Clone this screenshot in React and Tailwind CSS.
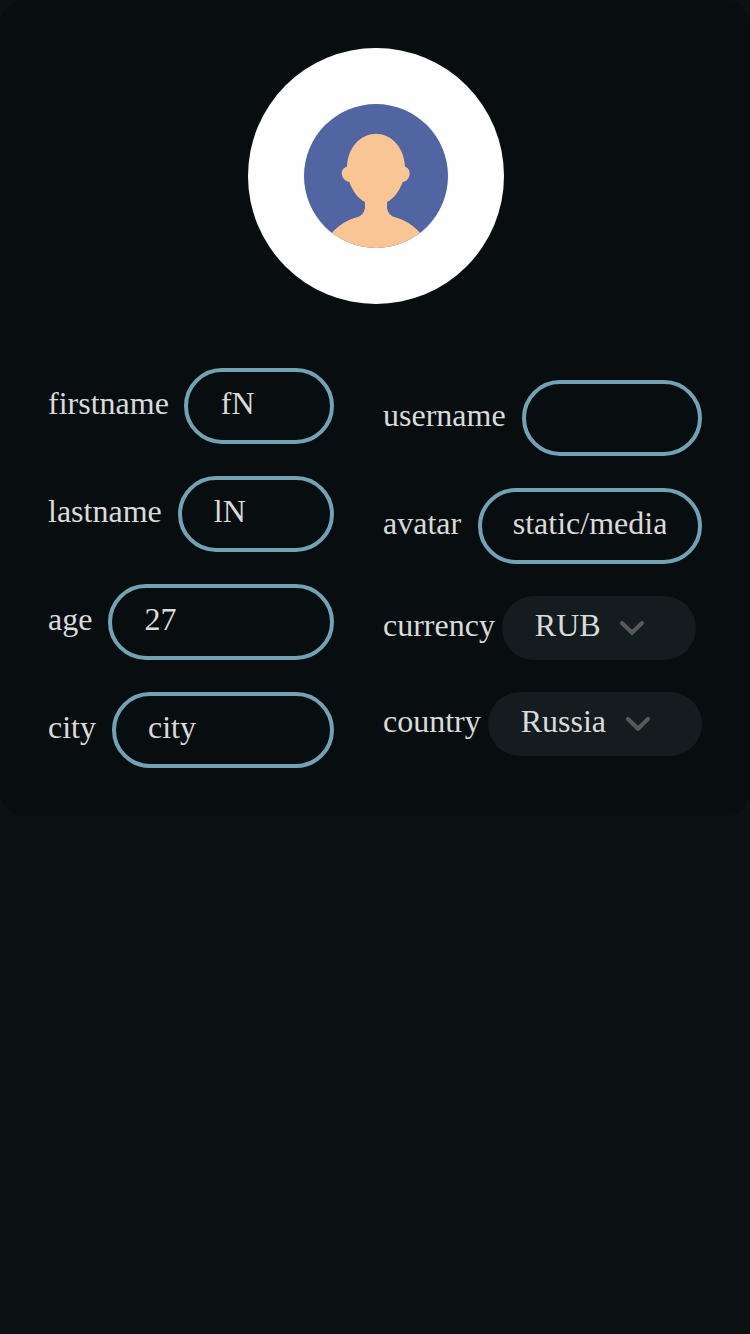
function Avatar() {
  return (
    <div className="flex size-64 items-center justify-center rounded-full bg-[#fefefe]">
      <svg className="size-36 rounded-full" viewBox="0 0 432 432" aria-hidden="true">
        <rect width="432" height="432" fill="#5165a2" />
        <path
          fill="#fac595"
          d="M216 89C168 89 130 134 129 188C119 190 113 199 113 208C114 222 124 233 136 234C146 261 161 283 183 294V308C183 323 174 335 161 339C130 347 104 364 84 386V432H348V386C328 364 302 347 271 339C258 335 249 323 249 308V294C271 283 286 261 296 234C308 233 317 222 317 208C317 199 312 190 303 188C302 134 264 89 216 89Z"
        />
      </svg>
    </div>
  );
}

function TextField({ label, value, gap = "ml-4", inset = "pl-8" }) {
  return (
    <div className="flex h-[76px] items-start">
      <span className="mt-[17px] leading-9">{label}</span>
      <div
        className={`${gap} ${inset} h-[76px] min-w-0 flex-1 rounded-full border-4 border-[#74a2b5] pt-[13px] pr-8 leading-9 whitespace-nowrap`}
      >
        <div className="overflow-hidden">{value}</div>
      </div>
    </div>
  );
}

function SelectField({ label, value }) {
  return (
    <div className="flex h-16 items-start">
      <span className="mt-[11px] leading-9">{label}</span>
      <div className="ml-[7.5px] flex h-16 items-start rounded-full bg-[#151c1f] pr-12 pl-[32.4px]">
        <span className="mt-[11px] leading-9">{value}</span>
        <svg
          className="mt-4 ml-[15.6px] size-8"
          viewBox="0 0 32 32"
          fill="none"
          stroke="#585858"
          strokeWidth="4.2"
          strokeLinecap="round"
          strokeLinejoin="round"
          aria-hidden="true"
        >
          <path d="M6 11L16 20.8L26 11" />
        </svg>
      </div>
    </div>
  );
}

export default function App() {
  return (
    <div className="min-h-[1334px] bg-[#0c1113] font-['Liberation_Serif',serif] text-[32px] text-[#dadada]">
      <div className="h-[816px] rounded-3xl bg-[#080e10] px-12 pt-12">
        <div className="flex justify-center pl-0.5">
          <Avatar />
        </div>
        <div className="mt-16 flex items-center justify-between">
          <div className="flex w-[286px] flex-col gap-8">
            <TextField label="firstname" value="fN" gap="ml-[15.5px]" inset="pl-[32.5px]" />
            <TextField label="lastname" value="lN" />
            <TextField label="age" value="27" />
            <TextField label="city" value="city" />
          </div>
          <div className="flex w-[319px] flex-col gap-8">
            <TextField label="username" value="" />
            <TextField label="avatar" value="static/media" gap="ml-[16.4px]" inset="pl-[31.2px]" />
            <SelectField label="currency" value="RUB" />
            <SelectField label="country" value="Russia" />
          </div>
        </div>
      </div>
    </div>
  );
}
